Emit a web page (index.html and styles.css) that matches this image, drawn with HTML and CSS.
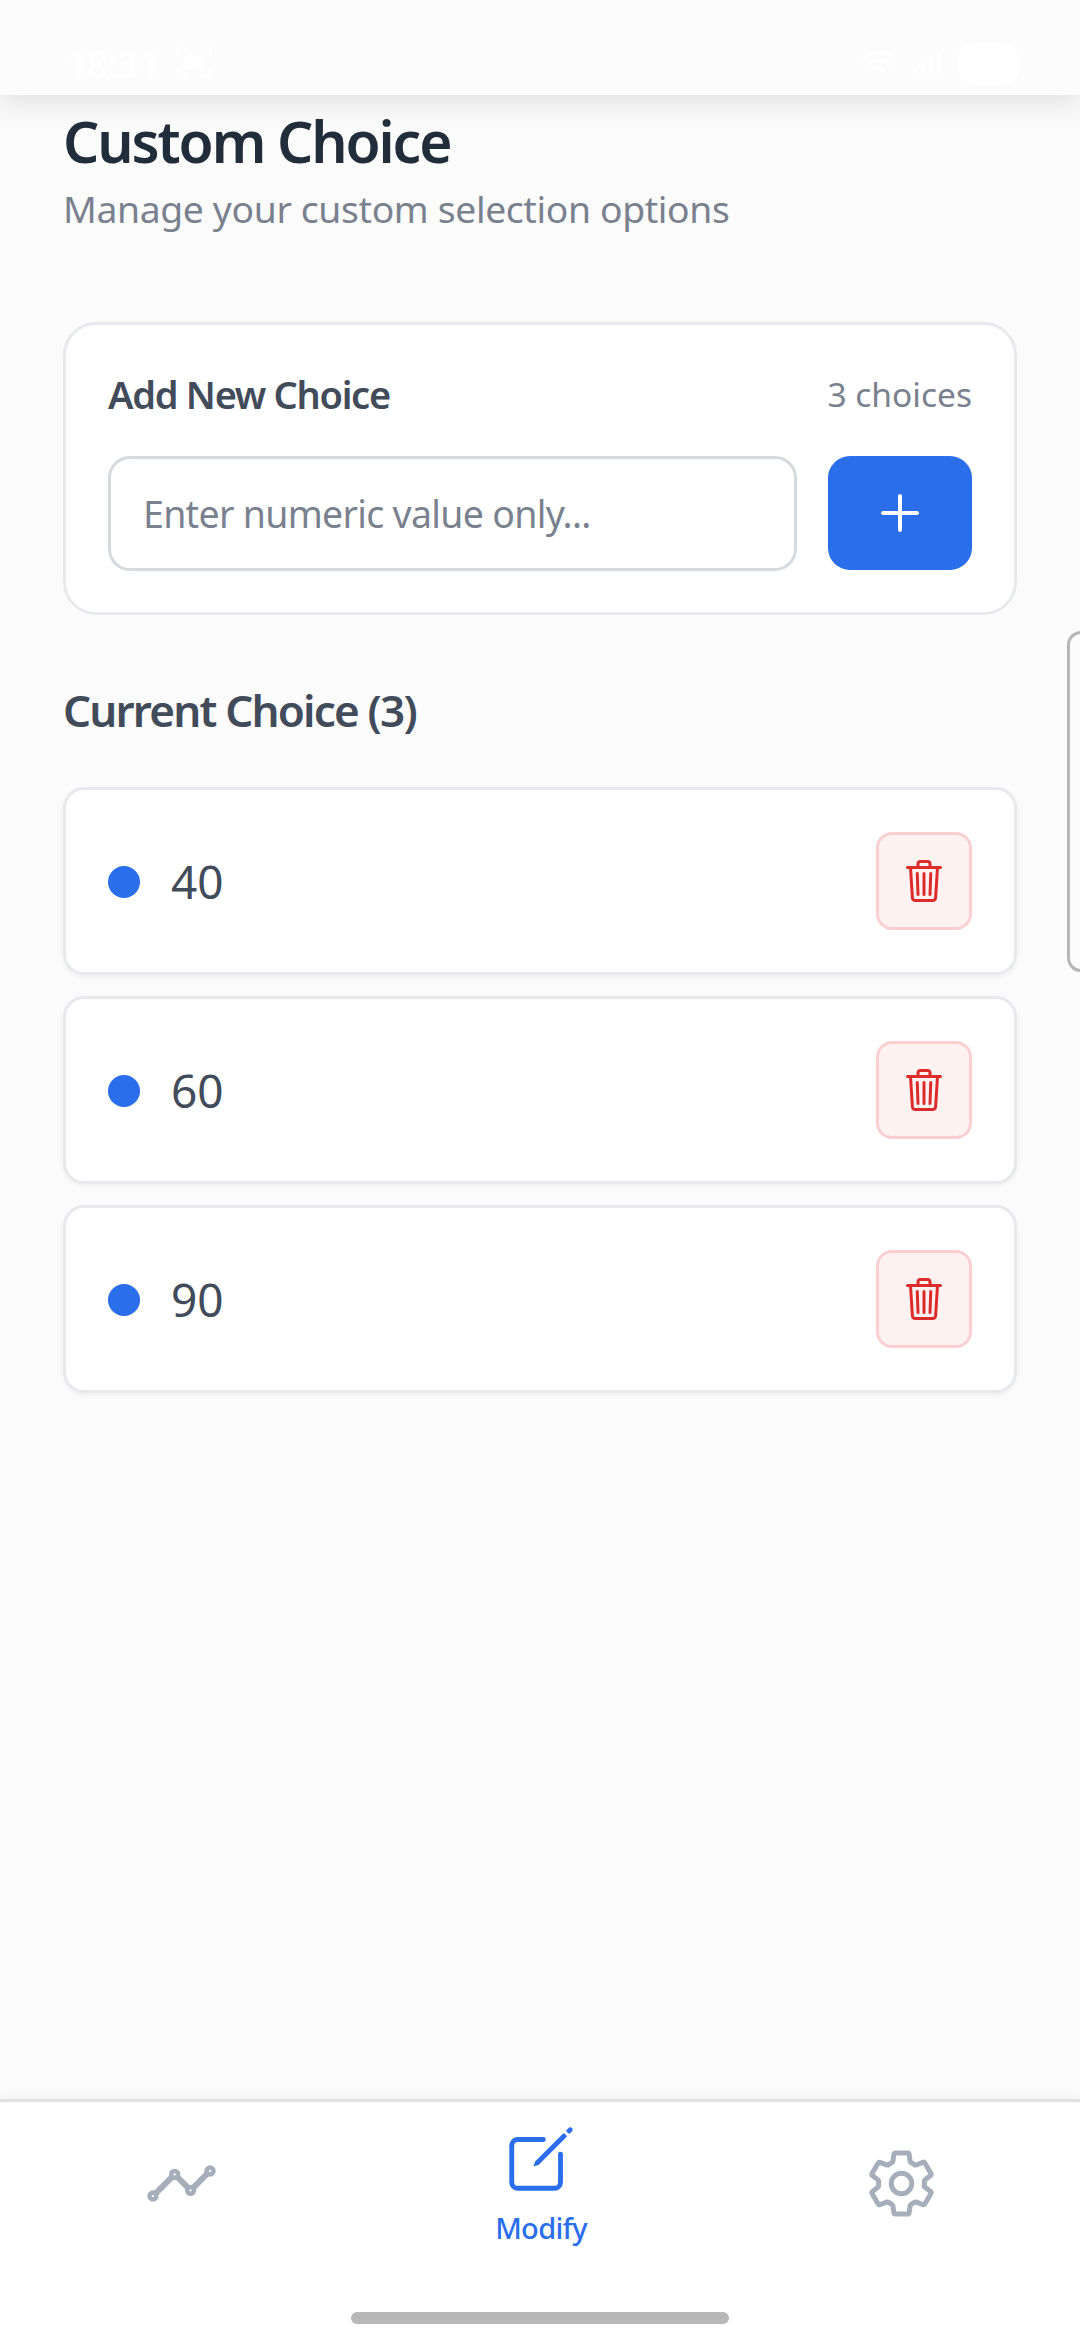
FILE: index.html
```html
<!DOCTYPE html>
<html lang="en">
<head>
<meta charset="utf-8">
<title>Custom Choice</title>
<link rel="stylesheet" href="styles.css">
</head>
<body>
<svg class="sprite" width="0" height="0">
  <symbol id="trash" viewBox="0 0 512 512">
    <g fill="none" stroke="currentColor" stroke-width="32" stroke-linecap="round" stroke-linejoin="round">
      <path d="M112 112l20 320c.95 18.49 14.4 32 32 32h184c17.67 0 30.87-13.51 32-32l20-320"/>
      <path d="M80 112h352M192 112V72a23.93 23.93 0 0124-24h80a23.93 23.93 0 0124 24v40M256 176v224M184 176l8 224M328 176l-8 224"/>
    </g>
  </symbol>
</svg>
<div class="screen">
  <header class="status">
    <div class="status-side">
      <span class="clock">18:31</span>
      <svg width="36" height="32" viewBox="0 0 36 32" fill="none" stroke="#fff" stroke-width="3"><path d="M2 9V2h8M26 2h8v7M2 23v7h8M26 30h8v-7"/><path d="M8 9h13v4l7-4v14l-7-4v4H8z" fill="#fff" stroke="none"/></svg>
    </div>
    <div class="status-side status-right">
      <svg width="36" height="26" viewBox="0 0 36 26" fill="none" stroke="#fff" stroke-width="3"><path d="M2 9q16-14 32 0M7 15q11-10 22 0M12 21q6-5 12 0"/></svg>
      <svg width="28" height="22" viewBox="0 0 28 22" fill="#fff"><path d="M0 16h4v6H0zM8 11h4v11H8zM16 5h4v17h-4zM24 0h4v22h-4z"/></svg>
      <span class="battery"></span>
    </div>
  </header>

  <main class="content">
    <h1 class="title">Custom Choice</h1>
    <p class="subtitle">Manage your custom selection options</p>

    <section class="card">
      <div class="card-head">
        <h2 class="card-title">Add New Choice</h2>
        <span class="count">3 choices</span>
      </div>
      <div class="form">
        <div class="field"><span>Enter numeric value only...</span></div>
        <button class="add" aria-label="Add">
          <svg width="38" height="38" viewBox="0 0 38 38" stroke="#fff" stroke-width="4" stroke-linecap="round"><path d="M19 2v34M2 19h34"/></svg>
        </button>
      </div>
    </section>

    <h2 class="list-title">Current Choice (3)</h2>
    <ul class="list">
      <li class="row"><i class="dot"></i><span class="value">40</span><button class="delete" aria-label="Delete"><svg width="48" height="48"><use href="#trash"/></svg></button></li>
      <li class="row"><i class="dot"></i><span class="value">60</span><button class="delete" aria-label="Delete"><svg width="48" height="48"><use href="#trash"/></svg></button></li>
      <li class="row"><i class="dot"></i><span class="value">90</span><button class="delete" aria-label="Delete"><svg width="48" height="48"><use href="#trash"/></svg></button></li>
    </ul>
  </main>

  <nav class="tabs">
    <div class="tab">
      <svg width="73" height="73" viewBox="0 0 512 512" fill="none" stroke="currentColor" stroke-width="32"><circle cx="456" cy="168" r="24"/><circle cx="320" cy="304" r="24"/><circle cx="208" cy="192" r="24"/><circle cx="56" cy="344" r="24"/><path stroke-width="42" d="M336 288l104-104M224 208l80 80M72 328l120-120"/></svg>
    </div>
    <div class="tab active">
      <svg width="78" height="78" viewBox="0 0 512 512" fill="currentColor"><path fill="none" stroke="currentColor" stroke-width="32" stroke-linecap="round" stroke-linejoin="round" d="M384 224v184a40 40 0 01-40 40H104a40 40 0 01-40-40V168a40 40 0 0140-40h167.48"/><path d="M459.94 53.25a16.06 16.06 0 00-23.22-.56L424.35 65a8 8 0 000 11.31l11.34 11.32a8 8 0 0011.34 0l12.06-12c6.1-6.09 6.67-16.01.85-22.38zM399.34 90L218.82 270.2a9 9 0 00-2.31 3.93L208.16 299a3.91 3.91 0 004.86 4.86l24.85-8.35a9 9 0 003.93-2.31L422 112.66a9 9 0 000-12.66l-9.95-10a9 9 0 00-12.71 0z"/></svg>
      <span class="tab-label">Modify</span>
    </div>
    <div class="tab">
      <svg width="73" height="73" viewBox="0 0 512 512" fill="none" stroke="currentColor" stroke-width="35" stroke-linecap="round" stroke-linejoin="round"><circle cx="256" cy="256" r="72"/><path d="M416.39 256a154.34 154.34 0 01-1.53 20.79l45.21 35.46a10.81 10.81 0 012.45 13.75l-42.77 74a10.81 10.81 0 01-13.14 4.59l-44.9-18.08a16.11 16.11 0 00-15.17 1.75A164.48 164.48 0 01325 400.8a15.94 15.94 0 00-8.82 12.14l-6.73 47.89a11.08 11.08 0 01-10.68 9.17h-85.54a11.11 11.11 0 01-10.69-8.87l-6.72-47.82a16.07 16.07 0 00-9-12.22 155.3 155.3 0 01-21.46-12.57 16 16 0 00-15.11-1.71l-44.89 18.07a10.81 10.81 0 01-13.14-4.58l-42.77-74a10.8 10.8 0 012.45-13.75l38.21-30a16.05 16.05 0 006-14.08c-.36-4.17-.58-8.33-.58-12.5s.21-8.27.58-12.35a16 16 0 00-6.07-13.94l-38.19-30A10.81 10.81 0 0149.48 186l42.77-74a10.81 10.81 0 0113.14-4.59l44.9 18.08a16.11 16.11 0 0015.17-1.75A164.48 164.48 0 01187 111.2a15.94 15.94 0 008.82-12.14l6.73-47.89A11.08 11.08 0 01213.23 42h85.54a11.11 11.11 0 0110.69 8.87l6.72 47.82a16.07 16.07 0 009 12.22 155.3 155.3 0 0121.46 12.57 16 16 0 0015.11 1.71l44.89-18.07a10.81 10.81 0 0113.14 4.58l42.77 74a10.8 10.8 0 01-2.45 13.75l-38.21 30a16.05 16.05 0 00-6.05 14.08c.33 4.14.55 8.3.55 12.47z"/></svg>
    </div>
  </nav>
  <div class="home"><span class="home-bar"></span></div>
  <div class="edge-handle"></div>
</div>
</body>
</html>
```
FILE: styles.css
```css
* { box-sizing: border-box; margin: 0; padding: 0; }
body { font-family: "Noto Sans", "Open Sans", sans-serif; background: #fbfbfb; color: #414b5a; }
svg { display: block; }
button { border: 0; }
.sprite { position: absolute; }
.screen { position: relative; width: 1080px; height: 2340px; overflow: hidden; display: flex; flex-direction: column; background: #fbfbfb; }

.status { height: 95px; flex: none; padding: 28px 60px 0 66px; display: flex; justify-content: space-between; background: #fcfcfc; box-shadow: 0 5px 30px rgba(0, 0, 0, .13); }
.status-side { display: flex; align-items: center; height: 70px; gap: 18px; color: #fff; }
.status-right { gap: 16px; }
.clock { font-size: 38px; font-weight: 600; letter-spacing: -1px; }
.battery { width: 63px; height: 43px; border-radius: 22px; background: #fff; }

.content { flex: 1; padding: 11px 63px 0; }
.title { font-size: 57px; line-height: 70px; font-weight: 600; letter-spacing: -2.1px; color: #212d3b; white-space: nowrap; }
.subtitle { margin-top: 7px; font-size: 37.3px; line-height: 52px; letter-spacing: -.36px; color: #7a818e; white-space: nowrap; }

.card { margin-top: 87px; padding: 40px 42px 41px; border: 3px solid #e8e9ec; border-radius: 33px; background: #fff; }
.card-head { display: flex; align-items: center; justify-content: space-between; height: 58px; }
.card-title { font-size: 38px; font-weight: 600; line-height: 58px; letter-spacing: -1.3px; white-space: nowrap; }
.count { font-size: 33.5px; line-height: 58px; color: #7a818e; white-space: nowrap; }
.form { display: flex; gap: 31px; margin-top: 33px; height: 115px; }
.field { flex: 1; display: flex; align-items: center; padding-left: 32px; border: 3px solid #d6d9de; border-radius: 22px; font-size: 37.5px; letter-spacing: -.7px; color: #7a818e; white-space: nowrap; }
.add { width: 144px; height: 114px; border-radius: 22px; background: #2b6eeb; display: grid; place-items: center; }

.list-title { margin-top: 65px; font-size: 44px; line-height: 60px; font-weight: 600; letter-spacing: -1.8px; white-space: nowrap; }
.list { margin-top: 47px; display: grid; gap: 21px; list-style: none; }
.row { display: flex; align-items: center; height: 188px; padding: 0 42px; border: 3px solid #e8e9ed; border-radius: 21px; background: #fff; box-shadow: 0 2px 5px rgba(0, 0, 0, .05); }
.dot { width: 32px; height: 32px; margin-top: 1px; border-radius: 50%; background: #2b6eeb; }
.value { margin-left: 31px; font-size: 46px; line-height: 60px; }
.delete { margin-left: auto; width: 96px; height: 98px; border: 3px solid #facfcf; border-radius: 16px; background: #fef2f1; color: #dc2b2b; display: grid; place-items: center; }

.tabs { flex: none; height: 176px; display: grid; grid-template-columns: repeat(3, 360px); background: #fff; border-top: 3px solid #dfdfdf; box-shadow: 0 -2px 14px rgba(0, 0, 0, .04); color: #a7aebb; }
.tab { display: flex; flex-direction: column; align-items: center; padding: 45px 0 0 2px; }
.tab.active { padding-top: 18px; color: #2b6eeb; }
.tab-label { margin-top: 10px; font-size: 29px; line-height: 40px; font-weight: 500; letter-spacing: -.7px; }
.home { flex: none; height: 65px; padding-top: 37px; display: flex; justify-content: center; background: #fff; }
.home-bar { width: 378px; height: 12px; border-radius: 6px; background: #b8b8b8; }
.edge-handle { position: absolute; left: 1067px; top: 631px; width: 30px; height: 341px; border: 3px solid #b5b6b8; border-radius: 14px; background: #fcfcfc; }
```
